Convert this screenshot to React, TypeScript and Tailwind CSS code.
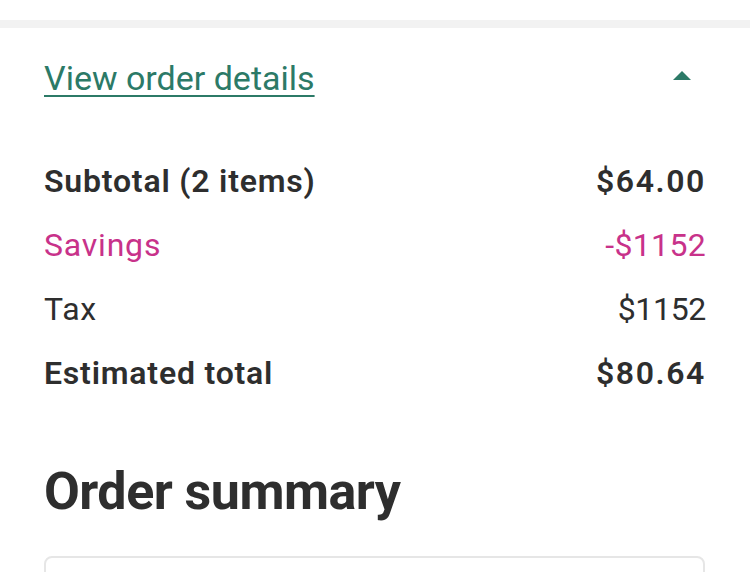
import React from "react";

const rows = [
  { label: "Subtotal (2 items)", value: "$64.00", cls: "font-semibold text-[#2e2e2e]", v: "tracking-[0.05em]" },
  { label: "Savings", value: "-$1152", cls: "font-normal text-[#c8328a]", v: "tracking-[0.01em]" },
  { label: "Tax", value: "$1152", cls: "font-normal text-[#2e2e2e]", v: "tracking-[-0.01em]" },
  { label: "Estimated total", value: "$80.64", cls: "font-semibold text-[#2e2e2e]", v: "tracking-[0.05em]" },
];

export default function App() {
  return (
    <div className="w-[750px] h-[572px] overflow-hidden bg-white" style={{ fontFamily: "Roboto, 'Liberation Sans', sans-serif" }}>
      <div className="h-5 bg-white" />
      <div className="h-2 bg-[#f2f2f2]" />
      <div className="px-[44px] pr-[45px]">
        <div className="flex items-center justify-between pt-[33px]">
          <a className="text-[34px] leading-[34px] text-[#2c7a67] underline decoration-2 underline-offset-[5px]">
            View order details
          </a>
          <svg width="22" height="12" viewBox="0 0 22 12" className="mr-[12px] mt-[-4px]">
            <path d="M11 1 L20 10 L2 10 Z" fill="#2c7a67" />
          </svg>
        </div>
        <div className="mt-[70px] flex flex-col">
          {rows.map((r) => (
            <div key={r.label} className={`flex justify-between h-[64px] items-start text-[32px] leading-[32px] ${r.cls}`}>
              <span className="tracking-[0.025em]">{r.label}</span>
              <span className={`${r.v} mr-[-1px]`}>{r.value}</span>
            </div>
          ))}
        </div>
        <h2 className="mt-[42px] text-[52px] leading-[58px] font-bold tracking-[-0.01em] text-[#2e2e2e]">Order summary</h2>
        <div className="mt-[35px] h-[40px] rounded-lg border-2 border-[#e6e6e6]" />
      </div>
    </div>
  );
}
